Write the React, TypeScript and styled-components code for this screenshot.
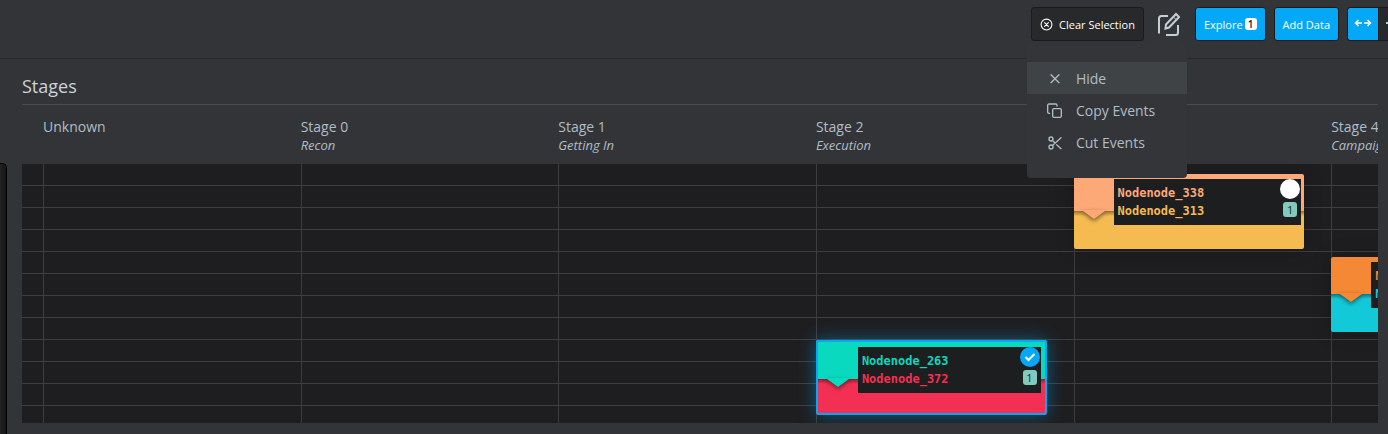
import React from "react";
import styled, { createGlobalStyle, css } from "styled-components";

const GlobalStyle = createGlobalStyle`
  * { box-sizing: border-box; }
  html, body, #root { height: 100%; }
  body {
    margin: 0;
    overflow: hidden;
    background: #333438;
    color: #afbdc6;
    font-family: "Open Sans", "Noto Sans", sans-serif;
    font-size: 14px;
  }
  button { font-family: inherit; cursor: pointer; }
`;

const Page = styled.div`
  min-height: 100%;
  display: flex;
  flex-direction: column;
`;

const Toolbar = styled.header`
  height: 59px;
  padding-top: 7px;
  display: flex;
  align-items: flex-start;
  justify-content: flex-end;
  border-bottom: 1px solid #28292c;
`;

const Button = styled.button<{ $primary?: boolean }>`
  height: 34px;
  padding: 2px 8px 0;
  display: flex;
  align-items: center;
  border: 1px solid #1a1b1d;
  border-radius: 3px;
  background: ${(p) => (p.$primary ? "#05a8f7" : "#28292b")};
  color: #fff;
  font-size: 11px;
  line-height: 16px;
  white-space: nowrap;
  & + & { margin-left: 8px; }
`;

const Count = styled.span`
  width: 12px;
  height: 12px;
  margin: 0 0 2px 2px;
  border-radius: 3px;
  background: #fff;
  color: #222;
  font-size: 10px;
  font-weight: 600;
  line-height: 12px;
  text-align: center;
`;

const Segments = styled.div`
  display: flex;
  width: 41px;
  height: 34px;
  margin-left: 8px;
  overflow: hidden;
`;

const Segment = styled.button<{ $active?: boolean }>`
  flex: none;
  width: 31px;
  padding: 0 0 2px;
  border: 1px solid #1a1b1d;
  border-right: 0;
  border-radius: ${(p) => (p.$active ? "3px 0 0 3px" : "0")};
  background: ${(p) => (p.$active ? "#05a8f7" : "#28292b")};
  color: #fff;
  display: flex;
  align-items: center;
  justify-content: center;
`;

const EditAnchor = styled.div`
  position: relative;
  margin: 0 15px 0 14px;
`;

const EditButton = styled.button`
  position: relative;
  z-index: 6;
  display: block;
  width: 22px;
  height: 34px;
  padding: 0;
  border: 0;
  background: none;
  color: #c5ced6;
  svg { display: block; }
`;

const Menu = styled.ul`
  position: absolute;
  z-index: 5;
  top: 36px;
  right: -7px;
  width: 160px;
  margin: 0;
  padding: 19px 0 20px;
  list-style: none;
  border-radius: 4px;
  background: #343539;
  &::before {
    content: "";
    position: absolute;
    top: -11px;
    right: 4px;
    width: 32px;
    height: 11px;
    background: inherit;
    clip-path: polygon(50% 0, 100% 100%, 0 100%);
  }
`;

const MenuItem = styled.button<{ $active?: boolean }>`
  width: 100%;
  height: 32px;
  padding: 1px 20px 0;
  display: flex;
  align-items: center;
  gap: 13px;
  border: 0;
  background: ${(p) => (p.$active ? "#3f4345" : "transparent")};
  color: #afbdc6;
  font-size: 14px;
  line-height: 21px;
`;

const Content = styled.main`
  flex: 1;
  display: flex;
`;

const SidePanel = styled.aside`
  width: 7px;
  margin-top: 104px;
  border: 1px solid #000;
  border-left: 0;
  border-bottom: 0;
  border-radius: 0 5px 0 0;
  background: linear-gradient(90deg, #222, #161616);
`;

const Board = styled.section`
  flex: 1;
  min-width: 0;
  padding: 15px 10px 11px 15px;
`;

const Title = styled.h1`
  margin: 0;
  height: 31px;
  border-bottom: 1px solid #4b4c50;
  color: #c9d3da;
  font-size: 18px;
  font-weight: 400;
  line-height: 25px;
`;

const Lanes = styled.div`
  display: flex;
  overflow: hidden;
`;

const Gutter = styled.div`
  flex: none;
  width: 21px;
`;

const Heading = styled.div`
  flex: 0 0 19%;
  height: 59px;
  padding-top: 12px;
  white-space: nowrap;
`;

const Name = styled.h2`
  margin: 0;
  font-size: 14px;
  font-weight: 400;
  line-height: 20px;
`;

const Phase = styled.em`
  display: block;
  font-size: 13px;
  line-height: 16px;
`;

const Plot = styled(Lanes)`
  height: 259px;
  background: repeating-linear-gradient(#1e1e20 0 21px, #3d3d40 21px 22px);
`;

const Lane = styled.div<{ $row: number }>`
  flex: 0 0 19%;
  padding: ${(p) => 10 + p.$row * 83}px 27px 0 0;
  background: linear-gradient(90deg, #3d3d40 1px, transparent 1px);
`;

const CardBox = styled.article<{ $from: string; $to: string; $selected?: boolean }>`
  --split: ${(p) => (p.$selected ? 39 : 37)}px;
  height: 75px;
  position: relative;
  display: flex;
  align-items: flex-start;
  padding: 5px 3px 0 40px;
  border-radius: 2px;
  overflow: hidden;
  background: linear-gradient(
    ${(p) => p.$from} var(--split),
    color-mix(in srgb, ${(p) => p.$to} 60%, #000) var(--split),
    ${(p) => p.$to} calc(var(--split) + 5px)
  );
  box-shadow: 0 0 20px rgba(0, 0, 0, 0.2);
  ${(p) =>
    p.$selected &&
    css`
      padding: 7px 6px 0 42px;
      box-shadow: 0 0 18px rgba(5, 168, 247, 0.45);
      &::after {
        content: "";
        position: absolute;
        inset: 0;
        border: 2px solid #05a8f7;
        border-radius: 3px;
        pointer-events: none;
      }
    `}
`;

const Notch = styled.svg<{ $selected?: boolean }>`
  position: absolute;
  left: ${(p) => (p.$selected ? 6 : 4)}px;
  top: calc(var(--split) - 1px);
  filter: drop-shadow(0 2px 2px rgba(0, 0, 0, 0.5));
`;

const Details = styled.div`
  flex: 1;
  height: 46px;
  padding: 5px 0 0 4px;
  display: flex;
  justify-content: space-between;
  background: #1d1e20;
`;

const NodeList = styled.div`
  font-family: "DejaVu Sans Mono", monospace;
  font-size: 12px;
  font-weight: 700;
  line-height: 18px;
`;

const NodeName = styled.div<{ $color: string }>`
  color: ${(p) => p.$color};
`;

const Status = styled.div`
  width: 22px;
  margin-top: -5px;
  display: flex;
  flex-direction: column;
  align-items: center;
  gap: 3px;
`;

const Tick = styled.span<{ $selected?: boolean }>`
  width: 20px;
  height: 20px;
  border-radius: 50%;
  display: flex;
  align-items: center;
  justify-content: center;
  background: ${(p) => (p.$selected ? "#05a8f7" : "#fff")};
`;

const Tally = styled.span`
  width: 14px;
  height: 15px;
  border-radius: 3px;
  background: #80cbbd;
  color: #1d2a2a;
  font-size: 11px;
  line-height: 16px;
  text-align: center;
`;

type CardData = { row: number; nodes: [string, string]; colors: [string, string]; selected?: boolean };
type Stage = { id: number; name?: string; phase?: string; card?: CardData };

const stages: Stage[] = [
  { id: 0, name: "Unknown" },
  { id: 1, name: "Stage 0", phase: "Recon" },
  { id: 2, name: "Stage 1", phase: "Getting In" },
  {
    id: 3,
    name: "Stage 2",
    phase: "Execution",
    card: { row: 2, nodes: ["Nodenode_263", "Nodenode_372"], colors: ["#09d9be", "#f33053"], selected: true },
  },
  {
    id: 4,
    card: { row: 0, nodes: ["Nodenode_338", "Nodenode_313"], colors: ["#fda877", "#f5bb51"] },
  },
  {
    id: 5,
    name: "Stage 4",
    phase: "Campaign",
    card: { row: 1, nodes: ["Nodenode_301", "Nodenode_355"], colors: ["#f58835", "#13c9d8"] },
  },
];

function Card({ nodes, colors, selected }: CardData) {
  return (
    <CardBox $from={colors[0]} $to={colors[1]} $selected={selected}>
      <Notch $selected={selected} width="32" height="10" viewBox="0 0 32 10" aria-hidden="true">
        <path d="M5 0H27V1L16 9L5 1Z" fill={colors[0]} />
      </Notch>
      <Details>
        <NodeList>
          {nodes.map((n, i) => (
            <NodeName key={n} $color={colors[i]}>{n}</NodeName>
          ))}
        </NodeList>
        <Status>
          <Tick $selected={selected}>
            {selected && (
              <svg width="12" height="10" viewBox="0 0 12 10" fill="none" stroke="#fff" strokeWidth="2">
                <path d="M1.500 5L4.500 8L10.500 2" />
              </svg>
            )}
          </Tick>
          <Tally>1</Tally>
        </Status>
      </Details>
    </CardBox>
  );
}

const Stroke = ({ size, children, width = 2 }: { size: number; width?: number; children: React.ReactNode }) => (
  <svg width={size} height={size} viewBox="0 0 24 24" fill="none" stroke="currentColor" strokeWidth={width}
    strokeLinecap="round" strokeLinejoin="round" aria-hidden="true">
    {children}
  </svg>
);

const ClearIcon = styled.span`
  display: flex;
  margin: 0 6px 1px 0;
`;

export default function App() {
  return (
    <>
      <GlobalStyle />
      <Page>
        <Toolbar>
          <Button>
            <ClearIcon>
              <Stroke size={13}>
                <circle cx="12" cy="12" r="10" />
                <path d="M8.500 8.500l7 7M15.500 8.500l-7 7" />
              </Stroke>
            </ClearIcon>
            Clear Selection
          </Button>
          <EditAnchor>
            <EditButton aria-label="Edit selection" aria-expanded="true">
              <svg width="22" height="24" viewBox="0 0 22 24" fill="none" stroke="currentColor" strokeWidth="2" aria-hidden="true">
                <path d="M10 4H3.500Q1 4 1 6.500V21.500M8 23H17.500Q20 23 20 20.500V13" />
                <path d="M7.500 16.500L8 12.500L18 2L21 5L11 15.500Z" />
                <path d="M15.500 5L18.500 8" strokeWidth="1" />
              </svg>
            </EditButton>
            <Menu>
              <li>
                <MenuItem $active>
                  <Stroke size={16}><path d="M6 5.500l12 12M18 5.500l-12 12" /></Stroke>
                  Hide
                </MenuItem>
              </li>
              <li>
                <MenuItem>
                  <Stroke size={16}>
                    <rect x="8.500" y="8.500" width="13" height="13" rx="2" />
                    <path d="M4 15.500H3a2 2 0 0 1-2-2V3.500a2 2 0 0 1 2-2H13a2 2 0 0 1 2 2v1" />
                  </Stroke>
                  Copy Events
                </MenuItem>
              </li>
              <li>
                <MenuItem>
                  <Stroke size={16}>
                    <circle cx="6" cy="6" r="3" />
                    <circle cx="6" cy="18" r="3" />
                    <path d="M21 4L8.200 15.800M14.500 14.500L21 20.500M8.200 8.200L12 12" />
                  </Stroke>
                  Cut Events
                </MenuItem>
              </li>
            </Menu>
          </EditAnchor>
          <Button $primary>
            Explore<Count>1</Count>
          </Button>
          <Button $primary>Add Data</Button>
          <Segments>
            <Segment $active aria-label="Expand width">
              <svg width="18" height="10" viewBox="0 0 18 10" fill="none" stroke="currentColor" strokeWidth="1.5" aria-hidden="true">
                <path d="M8 5H2M4.500 2L1.500 5L4.500 8M10 5H16M13.500 2L16.500 5L13.500 8" />
              </svg>
            </Segment>
            <Segment aria-label="Collapse width">
              <svg width="16" height="10" viewBox="0 0 16 10" fill="none" stroke="currentColor" strokeWidth="1.5" aria-hidden="true">
                <path d="M0 5H6M3 2L6 5L3 8M16 5H10M13 2L10 5L13 8" />
              </svg>
            </Segment>
          </Segments>
        </Toolbar>
        <Content>
          <SidePanel />
          <Board>
            <Title>Stages</Title>
            <Lanes>
              <Gutter />
              {stages.map((s) => (
                <Heading key={s.id}>
                  {s.name && <Name>{s.name}</Name>}
                  {s.phase && <Phase>{s.phase}</Phase>}
                </Heading>
              ))}
            </Lanes>
            <Plot>
              <Gutter />
              {stages.map((s) => (
                <Lane key={s.id} $row={s.card ? s.card.row : 0}>{s.card && <Card {...s.card} />}</Lane>
              ))}
            </Plot>
          </Board>
        </Content>
      </Page>
    </>
  );
}
